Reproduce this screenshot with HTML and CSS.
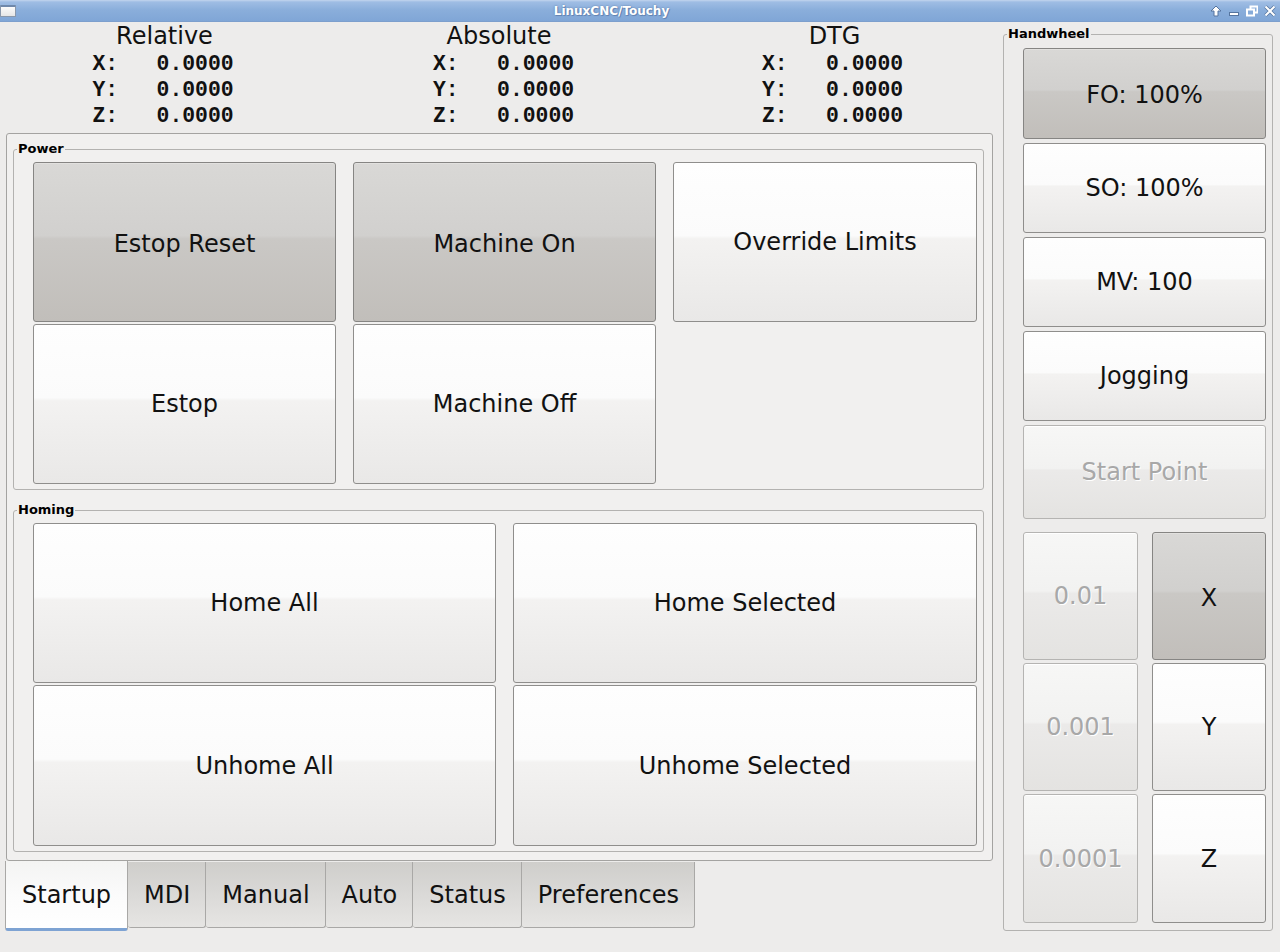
FILE: index.html
```html
<!DOCTYPE html>
<html>
<head>
<meta charset="utf-8">
<title>LinuxCNC/Touchy</title>
<link rel="stylesheet" href="styles.css">
</head>
<body>
<div class="titlebar">
  <div class="winicon"></div>
  <div class="title">LinuxCNC/Touchy</div>
  <div class="controls">
    <svg width="12" height="12" viewBox="0 0 12 12"><path d="M6 1 L11 6 L8 6 L8 11 L4 11 L4 6 L1 6 Z" fill="#fff" stroke="#56759f" stroke-width="1"/></svg>
    <svg width="12" height="12" viewBox="0 0 12 12"><rect x="1.5" y="7.5" width="9" height="3" fill="#fff" stroke="#56759f" stroke-width="1"/></svg>
    <svg width="12" height="12" viewBox="0 0 12 12"><rect x="4.5" y="1.5" width="7" height="6" fill="none" stroke="#fff" stroke-width="2"/><rect x="1" y="4.5" width="7" height="6" fill="#86abd9" stroke="#fff" stroke-width="2"/></svg>
    <svg width="12" height="12" viewBox="0 0 12 12"><path d="M1.5 1.5 L10.5 10.5 M10.5 1.5 L1.5 10.5" stroke="#56759f" stroke-width="3.4"/><path d="M1.5 1.5 L10.5 10.5 M10.5 1.5 L1.5 10.5" stroke="#fff" stroke-width="2"/></svg>
  </div>
</div>
<div class="main">
  <div class="left">
    <div class="dro">
      <div class="drocol c1">
        <div class="drohead">Relative</div>
        <div class="drorows"><div>X:   0.0000</div><div>Y:   0.0000</div><div>Z:   0.0000</div></div>
      </div>
      <div class="drocol c2">
        <div class="drohead">Absolute</div>
        <div class="drorows"><div>X:   0.0000</div><div>Y:   0.0000</div><div>Z:   0.0000</div></div>
      </div>
      <div class="drocol c3">
        <div class="drohead">DTG</div>
        <div class="drorows"><div>X:   0.0000</div><div>Y:   0.0000</div><div>Z:   0.0000</div></div>
      </div>
    </div>
    <div class="notebook">
      <div class="page">
        <fieldset class="frame">
          <legend>Power</legend>
          <div class="framebody grid3">
            <div class="btn on">Estop Reset</div>
            <div class="btn on">Machine On</div>
            <div class="btn">Override Limits</div>
            <div class="btn">Estop</div>
            <div class="btn">Machine Off</div>
          </div>
        </fieldset>
        <fieldset class="frame homing">
          <legend>Homing</legend>
          <div class="framebody grid2">
            <div class="btn">Home All</div>
            <div class="btn">Home Selected</div>
            <div class="btn">Unhome All</div>
            <div class="btn">Unhome Selected</div>
          </div>
        </fieldset>
      </div>
      <div class="tabs">
        <div class="tab active">Startup</div>
        <div class="tab">MDI</div>
        <div class="tab">Manual</div>
        <div class="tab">Auto</div>
        <div class="tab">Status</div>
        <div class="tab">Preferences</div>
      </div>
    </div>
  </div>
  <fieldset class="frame handwheel">
    <legend>Handwheel</legend>
    <div class="hwbody">
      <div class="btn on h91">FO: 100%</div>
      <div class="btn h90">SO: 100%</div>
      <div class="btn h90">MV: 100</div>
      <div class="btn h90">Jogging</div>
      <div class="btn dis h94">Start Point</div>
      <div class="hwgrid">
        <div class="btn dis">0.01</div>
        <div class="btn on">X</div>
        <div class="btn dis">0.001</div>
        <div class="btn">Y</div>
        <div class="btn dis">0.0001</div>
        <div class="btn">Z</div>
      </div>
    </div>
  </fieldset>
</div>
</body>
</html>
```

FILE: styles.css
```css
* { box-sizing: border-box; }
html, body {
  margin: 0;
  padding: 0;
}
body {
  width: 1280px;
  height: 952px;
  overflow: hidden;
  background: #edeceb;
  font-family: "DejaVu Sans", sans-serif;
  color: #111;
}

/* title bar */
.titlebar {
  height: 22px;
  display: flex;
  align-items: center;
  background: linear-gradient(to bottom, #c3d5ee 0px, #9fbde4 2px, #8aaedb 10px, #80a6d6 21px);
  border-bottom: 1px solid #7d9fcd;
}
.winicon {
  width: 16px;
  height: 12px;
  margin: 1px 0 0 0;
  background: linear-gradient(#fbfbfb, #e6e6e6);
  border: 1px solid #8a98ab;
  border-top: 2px solid #6f88ab;
  border-radius: 1px;
}
.title {
  flex: 1;
  text-align: center;
  font: bold 12px "DejaVu Sans", sans-serif;
  color: #fff;
  text-shadow: 0 0 2px #5676a3, 1px 1px 0 #6a8bbb;
  padding-top: 1px;
  padding-right: 3px;
}
.controls {
  display: flex;
  gap: 6px;
  padding-right: 4px;
  width: 70px;
  justify-content: flex-end;
}
.controls svg { display: block; }

/* main */
.main {
  display: flex;
  height: 930px;
}
.left {
  width: 1000px;
  flex: none;
}

/* DRO */
.dro {
  height: 111px;
  display: grid;
  grid-template-columns: 329px 340px 331px;
}
.drocol {
  display: flex;
  flex-direction: column;
  align-items: center;
}
.drohead {
  font: 24px "DejaVu Sans", sans-serif;
  line-height: 27px;
  padding-top: 1px;
  color: #111;
}
.drorows {
  font: bold 21.4px "Liberation Mono", monospace;
  line-height: 26px;
  white-space: pre;
  color: #111;
  margin-top: 1px;
}
.c1 .drorows { margin-left: -3px; }
.c2 .drorows { margin-left: 9px; }
.c3 .drorows { margin-left: -4px; }

/* notebook */
.notebook {
  margin-left: 6px;
  width: 987px;
}
.page {
  background: #f1f0ef;
  border: 1px solid #a4a3a1;
  border-radius: 3px;
  padding: 8px 8px 8px 6px;
}
.frame {
  margin: 0;
  padding: 0;
  border: 1px solid #b3b2b0;
  border-radius: 3px;
  min-width: 0;
}
.frame legend {
  font: bold 13px "DejaVu Sans", sans-serif;
  line-height: 14px;
  padding: 0 1px;
  margin-left: 3px;
  color: #000;
}
.homing { margin-top: 13px; }
.framebody {
  padding: 6px 6px 5px 19px;
  display: grid;
  row-gap: 2px;
  column-gap: 17px;
}
.grid3 {
  grid-template-columns: 303px 303px 304px;
  grid-template-rows: 160px 160px;
}
.grid2 {
  grid-template-columns: 463px 464px;
  grid-template-rows: 160px 161px;
}

/* buttons */
.btn {
  display: flex;
  align-items: center;
  justify-content: center;
  border: 1px solid #8f8e8c;
  border-radius: 3px;
  background: linear-gradient(to bottom, #fefefe 0%, #fbfbfb 46%, #f3f2f1 48%, #e9e8e7 100%);
  box-shadow: inset 0 1px 0 #fff;
  font: 24px "DejaVu Sans", sans-serif;
  color: #111;
  white-space: nowrap;
}
.btn.on {
  padding-top: 3px;
  background: linear-gradient(to bottom, #d9d8d6 0%, #d1d0ce 46%, #cac8c5 48%, #c1beba 100%);
  border-color: #868583;
  box-shadow: inset 0 1px 0 #e2e1df;
}
.btn.dis {
  color: #a8a8a8;
  text-shadow: 1px 1px 0 #fff;
  background: linear-gradient(to bottom, #f7f7f6 0%, #f2f2f1 46%, #ebeae9 48%, #e4e3e1 100%);
  border-color: #b5b4b2;
}

/* tabs */
.tabs {
  display: flex;
  align-items: flex-start;
  margin-left: -1px;
}
.tab {
  height: 66px;
  margin-top: 1px;
  padding: 0 15px 0 16px;
  display: flex;
  align-items: center;
  font: 24px "DejaVu Sans", sans-serif;
  color: #111;
  background: linear-gradient(to bottom, #cfcecb 0%, #d9d8d6 45%, #e6e5e3 100%);
  border: 1px solid #a9a8a6;
  border-top: none;
  border-left: none;
  border-radius: 0 0 3px 3px;
}
.tab.active {
  height: 70px;
  margin-top: 0;
  padding: 0 16px;
  background: linear-gradient(to bottom, #f4f4f3 0%, #fbfbfb 50%, #ffffff 100%);
  border: 1px solid #a9a8a6;
  border-top: none;
  border-bottom: 3px solid #7ea3d3;
  border-radius: 0 0 3px 3px;
}

/* handwheel */
.handwheel {
  margin: 5px 0 0 3px;
  width: 270px;
  align-self: flex-start;
}
.hwbody {
  padding: 7px 6px 7px 19px;
  display: flex;
  flex-direction: column;
  gap: 4px;
}
.h91 { height: 91px; }
.h90 { height: 90px; }
.h94 { height: 94px; }
.hwgrid {
  margin-top: 9px;
  display: grid;
  grid-template-columns: 115px 114px;
  grid-template-rows: 128px 128px 129px;
  column-gap: 14px;
  row-gap: 3px;
}
```
